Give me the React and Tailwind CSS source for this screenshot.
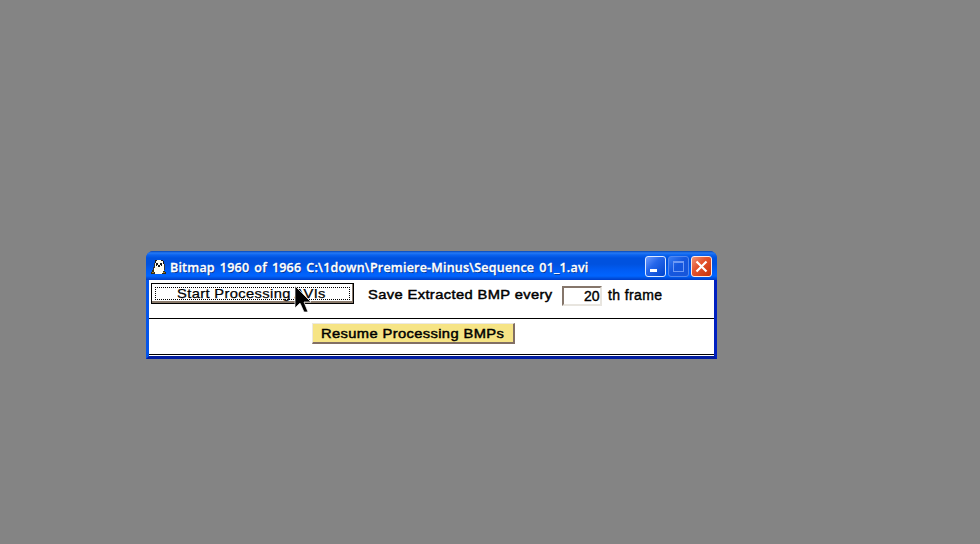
const FONT = "font-['Liberation_Sans',Arial,sans-serif]";

function Penguin() {
  return (
    <svg className="h-4 w-4 shrink-0" viewBox="0 0 16 16" shapeRendering="crispEdges">
      <path d="M5 1h5v1h2v3h1v9h-1v1H4v-1H3V6h1V2h1z" fill="#fffdf0" />
      <path d="M4 1h2v1H5v2H4zM10 1h2v1h1v3h-1V2h-2zM5 4h2v2H6v1H5zM9 4h2v3h-1V6H9zM7 6h2v2H7z" fill="#171717" />
      <path d="M3 4h1v5H3zM13 5h1v6h-1zM2 8h1v3H2z" fill="#343434" />
      <path d="M1 11h2v2h1v2H0v-2h1zM12 12h2v1h1v2h-4v-1h1z" fill="#342b12" />
      <path d="M1 13h2v1H1zM12 13h2v1h-2z" fill="#9b812f" />
    </svg>
  );
}

function CaptionButton({ className, children }) {
  return (
    <button className={`flex h-[21px] w-[21px] shrink-0 items-center justify-center rounded-[3px] border ${className}`}>
      {children}
    </button>
  );
}

function TitleBar() {
  return (
    <header className="flex h-[29px] items-start rounded-t-[7px] bg-[linear-gradient(180deg,#0847b5_0px,#2479f5_2px,#0b63ee_4px,#0052df_7px,#0052df_13px,#005cf4_19px,#0064ff_25px,#0051df_27px,#003dc7_29px)] px-[5px] pt-[5px]">
      <div className="flex h-[22px] w-[19px] shrink-0 items-center"><Penguin /></div>
      <h1 className="h-[22px] w-[475px] shrink-0 whitespace-pre pt-px font-['Open_Sans',sans-serif] text-[12.5px] font-semibold leading-[22px] tracking-[0.2px] text-white [-webkit-text-stroke:0.3px_white] [text-shadow:1px_1px_0_#06378f] [word-spacing:1.6px]">Bitmap 1960 of 1966 C:\1down\Premiere-Minus\Sequence 01_1.avi</h1>
      <div className="flex gap-[2px]">
        <CaptionButton className="border-[#dce9ff] bg-[linear-gradient(135deg,#6f9cff,#2667eb_40%,#0044cc)]">
          <svg className="h-[19px] w-[19px]" viewBox="0 0 19 19"><path d="M4 12h7v3H4z" fill="white" /></svg>
        </CaptionButton>
        <CaptionButton className="border-[#5388ee] bg-[linear-gradient(135deg,#397cf4,#1557df_45%,#1755d9)]">
          <svg className="h-[19px] w-[19px]" viewBox="0 0 19 19"><path d="M4 4h11v11H4zM5 6v8h9V6z" fill="#6e99f4" fillRule="evenodd" /></svg>
        </CaptionButton>
        <CaptionButton className="border-[#ffe9e3] bg-[linear-gradient(135deg,#ef9479,#e45530_40%,#c93208)]">
          <svg className="h-[19px] w-[19px]" viewBox="0 0 19 19"><path d="M4.5 4.5l10 10M14.5 4.5l-10 10" stroke="white" strokeWidth="2.2" /></svg>
        </CaptionButton>
      </div>
    </header>
  );
}

function Label({ className, children }) {
  return (
    <span className={`block h-4 shrink-0 whitespace-nowrap text-left leading-4 text-black ${FONT} ${className}`}>
      {children}
    </span>
  );
}

export default function App() {
  return (
    <main className={`h-[544px] w-[980px] overflow-hidden bg-[#848484] pl-[146px] pt-[251px] ${FONT}`}>
      <section className="relative h-[108px] w-[571px] rounded-t-[8px] bg-[#0831d9]">
        <TitleBar />
        <div className="h-[79px] border-x-[3px] border-b-[3px] border-b-[#001da0] border-l-[#0555e8] border-r-[#0020c0] bg-white">
          <div className="flex h-[39px] items-start border-b border-black pl-[2px] pt-[3px]">
            <button className="h-[21px] w-[203px] shrink-0 border border-black bg-white">
              <span className="block h-[19px] border-b-2 border-r border-[#8b7b6c] p-[3px]">
                <span className="flex h-[13px] w-[195px] items-start border border-dotted border-black pl-[21px]">
                  <Label className="-mt-[2px] w-[152px] origin-left scale-x-[1.13] text-[13px] tracking-[0.33px] [-webkit-text-stroke:0.25px_black]">Start Processing AVIs</Label>
                </span>
              </span>
            </button>
            <Label className="ml-[14px] mt-[4px] w-[184px] origin-left scale-x-[1.13] text-[13px] tracking-[0.34px] [-webkit-text-stroke:0.45px_black]">Save Extracted BMP every</Label>
            <div className="ml-[10px] mt-[3px] flex h-[20px] w-[40px] shrink-0 justify-end border-2 border-[#e8e5df] border-l-[#85766b] border-t-[#85766b] bg-white">
              <Label className="w-[16px] text-[14px] [-webkit-text-stroke:0.4px_black]">20</Label>
            </div>
            <Label className="ml-[6px] mt-[4px] w-[56px] text-[14px] tracking-[0.4px] [-webkit-text-stroke:0.4px_black]">th frame</Label>
          </div>
          <div className="flex h-[36px] items-start border-b border-black pl-[163px] pt-[4px]">
            <button className="flex h-[21px] w-[203px] items-start border-b-2 border-l border-r-2 border-t border-[#826f64] border-l-[#ede9df] border-t-[#ede9df] bg-[#f6e485] pl-[8px] pt-[2px]">
              <Label className="w-[184px] origin-left scale-x-[1.13] text-[13px] tracking-[0.34px] [-webkit-text-stroke:0.45px_black]">Resume Processing BMPs</Label>
            </button>
          </div>
        </div>
        <svg className="absolute left-[148px] top-[35px] h-[29px] w-[20px]" viewBox="0 0 20 29">
          <path d="M1 0v22l5-5 4 9h4l-4-10h7z" fill="black" stroke="white" strokeWidth="0.7" />
        </svg>
      </section>
    </main>
  );
}
